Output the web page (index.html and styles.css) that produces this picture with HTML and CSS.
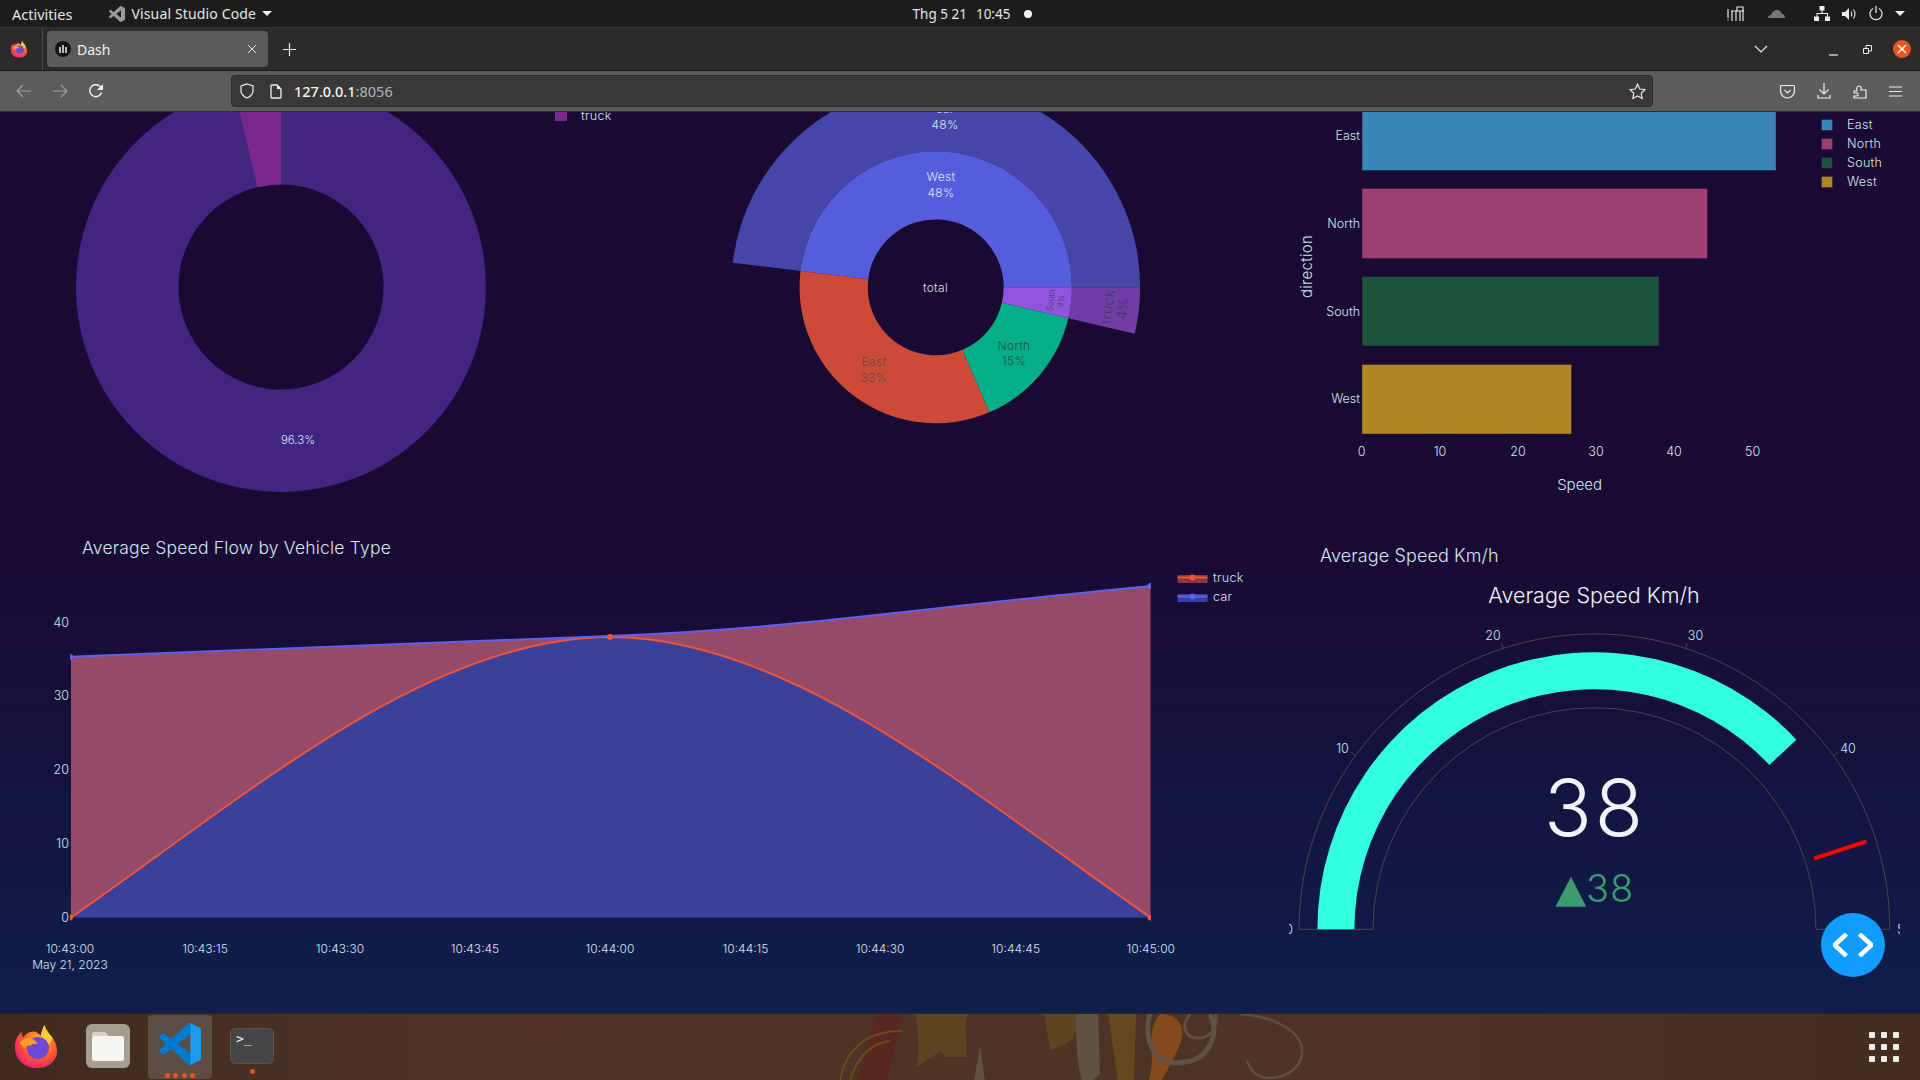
FILE: index.html
```html
<!DOCTYPE html>
<html lang="en">
<head>
<meta charset="utf-8">
<title>Dash</title>
<link rel="stylesheet" href="styles.css">
</head>
<body>
<div class="desktop">
  <header class="topbar">
    <div class="top-left">
      <span class="activities">Activities</span>
      <span class="app-menu">
        <svg class="app-icon" width="16" height="16" viewBox="0 0 100 100"><path fill="#9a9a9a" d="M96.5 10.8 75.9.9a6.2 6.2 0 0 0-7.1 1.2L29.4 38.1 12.2 25a4.2 4.2 0 0 0-5.3.2L1.4 30.3a4.2 4.2 0 0 0 0 6.2L16.3 50 1.4 63.6a4.2 4.2 0 0 0 0 6.2l5.500 5a4.2 4.2 0 0 0 5.300.2l17.200-13 39.400 35.900a6.2 6.2 0 0 0 7.100 1.200l20.600-9.900a6.200 6.200 0 0 0 3.500-5.600V16.400a6.200 6.200 0 0 0-3.500-5.600zM75 72.700 45.100 50 75 27.300z"/></svg>
        <span class="app-name">Visual Studio Code</span>
        <i class="caret"></i>
      </span>
    </div>
    <div class="clock"><span>Thg 5 21</span><span>10:45</span><i class="clock-dot"></i></div>
    <div class="tray">
      <svg width="17" height="16" viewBox="0 0 17 16" fill="none" stroke="#e6e6e6" stroke-width="1.2"><path d="M1 3v9M1 13.500v1M5 5v10M9 5v10M13 5v10M16 5v10M4 5h13M10 5V1h6v4"/></svg>
      <svg class="tray-cloud" width="17" height="10" viewBox="0 0 17 10"><path fill="#777" d="M0 9c0-2 1.500-3 3-3 1-3 3-5 6-5s4 2 5 4c2 0 3 2 3 4z"/></svg>
      <svg class="tray-net" width="16" height="15" viewBox="0 0 16 15" fill="#eee"><rect x="5.500" y="0" width="5" height="4.500"/><rect x="0" y="10.500" width="5" height="4.500"/><rect x="11" y="10.500" width="5" height="4.500"/><path d="M7.500 4h1v3h5.500v4h-1V8H3.500v3h-1V7h5z"/></svg>
      <svg width="15" height="14" viewBox="0 0 15 14" fill="none"><path fill="#eee" d="M0 5h3l4-4v12l-4-4H0z"/><path stroke="#eee" stroke-width="1.100" d="M9 4.500c1 1.500 1 3.500 0 5M11.500 2.500c2 3 2 6 0 9"/></svg>
      <svg width="14" height="15" viewBox="0 0 14 15" fill="none" stroke="#eee" stroke-width="1.200"><path d="M7 0v7M4 2.500a6 6 0 1 0 6 0"/></svg>
      <i class="caret"></i>
    </div>
  </header>

  <div class="tabbar">
    <div class="tab-logo">
      <svg width="18" height="18" viewBox="0 0 48 48"><use href="#firefox"/></svg>
    </div>
    <div class="tab">
      <span class="favicon"><i></i><i></i><i></i></span>
      <span class="tab-title">Dash</span>
      <svg class="tab-close" width="10" height="10" viewBox="0 0 10 10" stroke="#ddd" stroke-width="1"><path d="M1 1l8 8M9 1l-8 8"/></svg>
    </div>
    <svg class="tab-new" width="13" height="13" viewBox="0 0 13 13" stroke="#eee" stroke-width="1.200"><path d="M6.500 0v13M0 6.500h13"/></svg>
    <div class="tabbar-right">
      <svg class="tab-list" width="14" height="8" viewBox="0 0 14 8" fill="none" stroke="#eee" stroke-width="1.100"><path d="M1 1l6 6 6-6"/></svg>
      <svg class="win-min" width="9" height="9" viewBox="0 0 9 9" stroke="#eee" stroke-width="1.200"><path d="M0 8h9"/></svg>
      <svg class="win-max" width="9" height="9" viewBox="0 0 9 9" fill="none" stroke="#eee" stroke-width="1"><path d="M.5 3.500h5v5h-5zM3 3V.5h5.500V6H6"/></svg>
      <span class="win-close"><svg width="10" height="10" viewBox="0 0 10 10" stroke="#fff" stroke-width="1.400"><path d="M1 1l8 8M9 1l-8 8"/></svg></span>
    </div>
  </div>

  <nav class="toolbar">
    <div class="nav-btns">
      <svg width="16" height="14" viewBox="0 0 16 14" fill="none" stroke="#a2a2a2" stroke-width="1.200"><path d="M15 7H1M7 1L1 7l6 6"/></svg>
      <svg width="16" height="14" viewBox="0 0 16 14" fill="none" stroke="#a2a2a2" stroke-width="1.200"><path d="M1 7h14M9 1l6 6-6 6"/></svg>
      <svg width="16" height="16" viewBox="0 0 16 16" fill="none" stroke="#f2f2f2" stroke-width="1.400"><path d="M13.500 9.500A6 6 0 1 1 11.500 3L14 5"/><path fill="#f2f2f2" stroke="none" d="M15 1v6H9z"/></svg>
    </div>
    <div class="urlbar">
      <svg width="14" height="16" viewBox="0 0 14 16" fill="none" stroke="#eee" stroke-width="1.200"><path d="M7 1l6 2v5c0 3-3 6-6 7-3-1-6-4-6-7V3z"/></svg>
      <svg class="url-doc" width="12" height="15" viewBox="0 0 12 15" fill="none" stroke="#eee" stroke-width="1.300"><path d="M1 2c0-.6.400-1 1-1h5l4 4v8c0 .6-.4 1-1 1H2c-.6 0-1-.4-1-1z"/><path fill="#eee" stroke="none" d="M7 1l4 4H7z"/></svg>
      <span class="url"><b>127.0.0.1</b>:8056</span>
      <svg class="url-star" width="17" height="17" viewBox="0 0 17 17" fill="none" stroke="#eee" stroke-width="1.200"><path d="M8.500 1.200l2.300 4.800 5.200.7-3.800 3.600.9 5.200-4.600-2.500-4.600 2.500.9-5.200L1 6.700l5.200-.7z"/></svg>
    </div>
    <div class="tools">
      <svg width="15" height="15" viewBox="0 0 15 15" fill="none" stroke="#eee" stroke-width="1.200"><path d="M1.500 1.500h12c.6 0 1 .4 1 1V7c0 4-3.500 7-7 7s-7-3-7-7V2.500c0-.6.400-1 1-1z"/><path d="M4.500 6l3 3 3-3"/></svg>
      <svg width="14" height="16" viewBox="0 0 14 16" fill="none" stroke="#eee" stroke-width="1.200"><path d="M7 0v11M2.500 6.500L7 11l4.500-4.500M1 12v3h12v-3"/></svg>
      <svg width="14" height="17" viewBox="0 0 14 17" fill="none" stroke="#eee" stroke-width="1.200"><path d="M1 9h3V8c-1-2 .5-4 2-4S9 6 8 7.500V8h5v8H1v-2h3c1.500 0 1.500-3 0-3H1z" transform="translate(0 -1)"/></svg>
      <svg width="13" height="11" viewBox="0 0 13 11" stroke="#eee" stroke-width="1.200"><path d="M0 1h13M0 5.500h13M0 10h13"/></svg>
    </div>
  </nav>

  <main class="dashboard">
    <section class="panel panel-pie">
      <svg class="chart" viewBox="0 112 620 408" width="620" height="408">
        <circle class="pie-ring" cx="281" cy="287" r="153.750"/>
        <path class="pie-slice" d="M281 82V184.500A102.500 102.500 0 0 0 257.400 187.300L233.800 87.500A205 205 0 0 1 281 82Z"/>
        <text class="t t-11" x="298" y="440" text-anchor="middle">96.3%</text>
        <rect class="pie-slice" x="555" y="105" width="12" height="16"/>
        <text class="t t-13 lg" x="581" y="116">truck</text>
      </svg>
    </section>

    <section class="panel panel-sun">
      <svg class="chart" viewBox="620 112 660 408" width="660" height="408">
        <path class="s-car" d="M1140.200 287.300A204.500 204.500 0 0 0 732.700 262.800L800.500 271A136.200 136.200 0 0 1 1071.900 287.300Z"/>
        <path class="s-truck" d="M1134.800 333.800A204.500 204.500 0 0 0 1140.200 287.300L1071.900 287.300A136.200 136.200 0 0 1 1068.300 318.300Z"/>
        <path class="s-west" d="M1071.900 287.300A136.200 136.200 0 0 0 800.500 271L868.200 279.200A68 68 0 0 1 1003.700 287.300Z"/>
        <path class="s-east" d="M800.500 271A136.200 136.200 0 0 0 989.300 412.300L962.500 349.800A68 68 0 0 1 868.200 279.200Z"/>
        <path class="s-north" d="M989.300 412.300A136.200 136.200 0 0 0 1068.300 318.300L1001.900 302.800A68 68 0 0 1 962.500 349.800Z"/>
        <path class="s-south" d="M1068.300 318.300A136.200 136.200 0 0 0 1071.900 287.300L1003.700 287.300A68 68 0 0 1 1001.900 302.800Z"/>
        <text class="t t-12 c lg" x="945" y="109">car</text>
        <text class="t t-12 c lg" x="945" y="125">48%</text>
        <text class="t t-12 c lg" x="941" y="177">West</text>
        <text class="t t-12 c lg" x="941" y="193">48%</text>
        <text class="t t-12 c lg" x="935.500" y="288">total</text>
        <text class="t t-12 c lg dark" x="874" y="362">East</text>
        <text class="t t-12 c lg dark" x="874" y="378">33%</text>
        <text class="t t-12 c lg dark2" x="1014" y="346">North</text>
        <text class="t t-12 c lg dark2" x="1014" y="361">15%</text>
        <text class="t t-8 c dark3" transform="translate(1050.700 300.700) rotate(-83)">South</text>
        <text class="t t-8 c dark3" transform="translate(1060.700 301.700) rotate(-83)">4%</text>
        <text class="t t-14 c lg dark3" transform="translate(1107.300 307) rotate(-83)">truck</text>
        <text class="t t-14 c dark3" transform="translate(1122 309) rotate(-83)">4%</text>
      </svg>
    </section>

    <section class="panel panel-bars">
      <svg class="chart" viewBox="1280 112 640 408" width="640" height="408">
        <rect class="bar b-east" x="1362" y="100" width="414" height="70.500"/>
        <rect class="bar b-north" x="1362" y="188.500" width="345.500" height="70"/>
        <rect class="bar b-south" x="1362" y="276.500" width="297" height="69.500"/>
        <rect class="bar b-west" x="1362" y="364.500" width="209.500" height="69.500"/>
        <text class="t t-13 e" x="1360" y="136">East</text>
        <text class="t t-13 e" x="1360" y="224">North</text>
        <text class="t t-13 e" x="1360" y="312">South</text>
        <text class="t t-13 e" x="1360" y="399">West</text>
        <text class="t t-13 c" x="1361.600" y="452">0</text>
        <text class="t t-13 c" x="1440" y="452">10</text>
        <text class="t t-13 c" x="1518" y="452">20</text>
        <text class="t t-13 c" x="1596" y="452">30</text>
        <text class="t t-13 c" x="1674" y="452">40</text>
        <text class="t t-13 c" x="1752.600" y="452">50</text>
        <text class="t t-15 c" x="1579.600" y="485">Speed</text>
        <text class="t t-15 c lg" transform="translate(1306 267) rotate(-90)">direction</text>
        <rect class="bar b-east" x="1821.500" y="119.500" width="11" height="11"/>
        <rect class="bar b-north" x="1821.500" y="138.500" width="11" height="11"/>
        <rect class="bar b-south" x="1821.500" y="157.500" width="11" height="11"/>
        <rect class="bar b-west" x="1821.500" y="176.500" width="11" height="11"/>
        <text class="t t-13 lg" x="1847" y="125">East</text>
        <text class="t t-13 lg" x="1847" y="144">North</text>
        <text class="t t-13 lg" x="1847" y="163">South</text>
        <text class="t t-13 lg" x="1847" y="182">West</text>
      </svg>
    </section>

    <section class="panel panel-line">
      <svg class="chart" viewBox="0 520 1280 493" width="1280" height="493">
        <defs><clipPath id="plot-clip"><rect x="70" y="560" width="1081" height="362"/></clipPath></defs>
        <text class="t t-17" x="82" y="547.500">Average Speed Flow by Vehicle Type</text>
        <path class="a-car" d="M71 656.700C250 651 430 643 610 636S900 610 1150.500 586V917.500H71Z"/>
        <path class="a-truck" d="M71 917.500C251 792 430 637 610 637S970 792 1150.500 917.500Z"/>
        <path class="zero" d="M71 917.500H1150.500"/>
        <g clip-path="url(#plot-clip)">
          <path class="l-truck" d="M71 917.500C251 792 430 637 610 637S970 792 1150.500 917.500"/>
          <path class="l-car" d="M71 656.700C250 651 430 643 610 636S900 610 1150.500 586"/>
          <circle class="m-car" cx="70" cy="656.700" r="3"/>
          <circle class="m-car" cx="1150.500" cy="586" r="3"/>
          <circle class="m-truck" cx="610" cy="637" r="3"/>
          <circle class="m-truck" cx="70" cy="917.500" r="3"/>
          <circle class="m-truck" cx="1150.500" cy="917.500" r="3"/>
        </g>
        <text class="t t-13 e" x="69" y="623">40</text>
        <text class="t t-13 e" x="69" y="696">30</text>
        <text class="t t-13 e" x="69" y="770">20</text>
        <text class="t t-13 e" x="69" y="844">10</text>
        <text class="t t-13 e" x="69" y="918">0</text>
        <text class="t t-12 c" x="70" y="949">10:43:00</text>
        <text class="t t-12 c" x="70" y="965">May 21, 2023</text>
        <text class="t t-12 c" x="205" y="949">10:43:15</text>
        <text class="t t-12 c" x="340" y="949">10:43:30</text>
        <text class="t t-12 c" x="475" y="949">10:43:45</text>
        <text class="t t-12 c" x="610" y="949">10:44:00</text>
        <text class="t t-12 c" x="745.500" y="949">10:44:15</text>
        <text class="t t-12 c" x="880" y="949">10:44:30</text>
        <text class="t t-12 c" x="1015.700" y="949">10:44:45</text>
        <text class="t t-12 c" x="1150.800" y="949">10:45:00</text>
        <rect class="k-truck" x="1177.500" y="575" width="30" height="8"/>
        <path class="l-truck" d="M1177.500 577.500h30"/>
        <circle class="m-truck" cx="1192.500" cy="577.500" r="3"/>
        <text class="t t-13 lg" x="1213" y="578">truck</text>
        <rect class="k-car" x="1177.500" y="594" width="30" height="8"/>
        <path class="l-car" d="M1177.500 596.500h30"/>
        <circle class="m-car" cx="1192.500" cy="596.500" r="3"/>
        <text class="t t-13 lg" x="1213" y="597">car</text>
      </svg>
    </section>

    <section class="panel panel-gauge">
      <svg class="chart" viewBox="1280 520 640 493" width="640" height="493">
        <defs><clipPath id="gauge-clip"><rect x="1289" y="520" width="611" height="493"/></clipPath></defs>
        <text class="t t-18" x="1320" y="556">Average Speed Km/h</text>
        <text class="t t-22 c white" x="1594" y="595">Average Speed Km/h</text>
        <path class="g-frame" d="M1299 929.300A295.400 295.400 0 0 1 1889.800 929.300H1816A221.400 221.400 0 0 0 1373 929.300Z"/>
        <path class="g-frame" d="M1355.400 755.700L1350.900 752.400M1503.100 648.300L1501.400 643M1685.700 648.300L1687.400 643M1833.400 755.700L1837.900 752.400"/>
        <path class="g-bar" d="M1317.400 929.300A277 277 0 0 1 1796.400 739.700L1769.400 765A240 240 0 0 0 1354.400 929.300Z"/>
        <path class="g-thresh" d="M1813.900 858.700L1866.500 841.300"/>
        <text class="t t-13 c" x="1342.500" y="749">10</text>
        <text class="t t-13 c" x="1493" y="636">20</text>
        <text class="t t-13 c" x="1695.500" y="636">30</text>
        <text class="t t-13 c" x="1848" y="749">40</text>
        <g clip-path="url(#gauge-clip)">
          <text class="t t-13 e" x="1293" y="930">0</text>
          <text class="t t-13" x="1897" y="930">50</text>
        </g>
        <text class="g-num" x="1595" y="836">38</text>
        <path class="g-tri" d="M1571 876.700L1586.300 906.700H1555.500Z"/>
        <text class="g-delta" x="1586" y="902">38</text>
      </svg>
    </section>

    <button class="debug-btn" type="button" aria-label="Toggle debug">
      <svg width="40" height="24" viewBox="0 0 40 24" fill="none" stroke="#fff" stroke-width="4.500"><path d="M13.500 1L1.500 12l12 11M26.500 1l12 11-12 11"/></svg>
    </button>
  </main>

  <footer class="dock">
    <svg class="wallpaper" viewBox="0 0 1920 67" width="1920" height="67" preserveAspectRatio="none">
      <path fill="#54301f" d="M510 0h60l-20 30-15 0z" opacity=".5"/>
      <path fill="#5a2620" d="M878 0h26l-8 30-10 37h-27l6-30z"/>
      <path fill="#5e4420" d="M916 0h52c-6 22 2 30-2 43h-20l-5-6-12 8-13 8c6-20 0-38 0-53z"/>
      <path fill="none" stroke="#6b4a1c" stroke-width="2" d="M840 67c5-30 25-50 62-50M850 67c6-22 20-38 40-40"/>
      <path fill="#625042" d="M980 32l5 35h-11z"/>
      <path fill="#5e4420" d="M1044 0h32c3 15 0 30-26 36z"/>
      <path fill="#5f5245" d="M1076 0h22l2 60-8 7h-10c-6-20-6-45-6-67z"/>
      <path fill="#66481e" d="M1108 0h28l-2 67h-16z"/>
      <path fill="#84491c" d="M1160 0c20 0 28 15 18 35l-10 20-7 12h-13c10-22-5-45 12-67z"/>
      <path fill="none" stroke="#5f5245" stroke-width="5" d="M1150 0c-8 25 5 55 35 48 25-3 35-30 25-48"/>
      <path fill="none" stroke="#5c5043" stroke-width="2.500" d="M1240 0c30 2 60 15 62 35 2 20-20 32-40 28-8-2-12-8-15-16"/>
      <path fill="none" stroke="#5f5245" stroke-width="3" d="M1190 0c-10 12-5 24 8 24s20-12 18-24"/>
    </svg>
    <div class="dock-item dock-firefox">
      <svg width="46" height="48" viewBox="0 0 48 48"><use href="#firefox"/></svg>
    </div>
    <div class="dock-item dock-files">
      <svg width="44" height="44" viewBox="0 0 44 44"><rect width="44" height="44" rx="6" fill="#a59f8e"/><path fill="#d6d2c8" d="M6 11c0-2 1-3 3-3h10l5 5H6z"/><rect x="6" y="12" width="32" height="25" rx="2.500" fill="#f7f5f2"/></svg>
    </div>
    <div class="dock-item dock-code">
      <svg width="42" height="42" viewBox="0 0 100 100"><path fill="#007acc" d="M96.500 10.800 75.900.9a6.200 6.200 0 0 0-7.100 1.200L29.400 38.100 12.200 25a4.200 4.200 0 0 0-5.300.2L1.400 30.300a4.200 4.200 0 0 0 0 6.200L16.300 50 1.400 63.600a4.200 4.200 0 0 0 0 6.200l5.500 5a4.200 4.200 0 0 0 5.300.2l17.200-13 39.400 35.900a6.200 6.200 0 0 0 7.100 1.200l20.600-9.900a6.200 6.200 0 0 0 3.500-5.600V16.400a6.200 6.200 0 0 0-3.500-5.600zM75 72.700 45.100 50 75 27.300z"/><path fill="#1f9cf0" d="M68.800 2.100a6.200 6.200 0 0 1 7.100-1.200l20.600 9.900a6.200 6.200 0 0 1 3.500 5.600v67.200a6.200 6.200 0 0 1-3.500 5.600l-20.600 9.900a6.200 6.200 0 0 1-7.100-1.200c2.500 2.400 6.200.7 6.200-2.800V4.900c0-3.500-3.700-5.200-6.200-2.800z"/></svg>
      <span class="dots"><i></i><i></i><i></i><i></i></span>
    </div>
    <div class="dock-item dock-term">
      <span class="term"><span class="term-prompt">&gt;_</span></span>
      <span class="dots"><i></i></span>
    </div>
    <div class="apps-grid"><i></i><i></i><i></i><i></i><i></i><i></i><i></i><i></i><i></i></div>
  </footer>
</div>

<svg class="defs-only" width="0" height="0">
  <defs>
    <radialGradient id="ff-body" cx="60%" cy="35%" r="75%"><stop offset="0" stop-color="#ffbd30"/><stop offset=".55" stop-color="#ff5a2c"/><stop offset="1" stop-color="#e31587"/></radialGradient>
    <g id="firefox">
      <path fill="url(#ff-body)" d="M33 2c1 5 4 8 8 13 5 7 6 14 4 20-3 8-11 12-20 12C12 47 2 38 2 25 2 18 5 12 9 9c0 3 1 5 2 6 2-4 6-6 9-6 3-1 6 1 9 4 1-4 2-8 4-11z"/>
      <path fill="#ffca3a" d="M33 2c-2 3-3 7-4 11 3 3 6 8 6 12 4-4 7-8 6-10C37 10 34 7 33 2z"/>
      <circle cx="26" cy="26" r="11.500" fill="#6c4bd3"/>
      <path fill="#ff9d2a" d="M7 20c4-4 10-6 14-3 3 2 4 3 5 5-3-1-7 0-8 2-2-1-4 0-6 2-2-2-4-4-5-6z"/>
    </g>
  </defs>
</svg>
</body>
</html>
```
FILE: styles.css
```css
* { box-sizing: border-box; }
html, body { margin: 0; height: 100%; overflow: hidden; background: #190933; }
body { font-family: "Noto Sans", "Open Sans", sans-serif; }
svg { display: block; flex: none; }
.defs-only { position: absolute; }

.desktop { width: 1920px; height: 1080px; display: flex; flex-direction: column; }

.topbar {
  height: 27px; background: #1c1c1c; color: #e6e6e6; font-size: 14px;
  display: grid; grid-template-columns: 1fr auto 1fr; align-items: center; padding: 0 15px 0 12px;
}
.top-left { display: flex; align-items: center; gap: 37px; }
.activities { font-size: 14.500px; }
.app-menu { display: flex; align-items: center; gap: 6px; }
.app-name { letter-spacing: .15px; }
.caret { display: block; width: 0; height: 0; border-left: 5px solid transparent; border-right: 5px solid transparent; border-top: 5px solid #eee; }
.clock { display: flex; align-items: center; gap: 9px; margin-left: 28px; font-size: 13.500px; }
.clock-dot { width: 8px; height: 8px; border-radius: 50%; background: #f2f2f2; margin-left: 5px; }
.tray { display: flex; align-items: center; justify-content: flex-end; gap: 12px; }
.tray-cloud { margin: 0 17px 0 12px; }

.tabbar { height: 44px; background: #2b2b2b; border-bottom: 1px solid #1a1a1a; border-top: 1px solid #333; display: flex; align-items: center; padding-right: 9px; }
.tab-logo { width: 43px; height: 100%; border-right: 1px solid #4a4a4a; display: flex; align-items: center; justify-content: center; padding-right: 4px; }
.tab { width: 221px; height: 36px; margin-left: 4px; background: #5b5b5b; border-radius: 4px; display: flex; align-items: center; padding: 0 11px 0 8px; color: #f2f2f2; font-size: 14px; }
.favicon { width: 16px; height: 16px; border-radius: 50%; background: #141414; display: flex; align-items: flex-end; justify-content: center; gap: 1px; padding-bottom: 4px; margin-right: 6px; }
.favicon i { display: block; width: 2px; height: 6px; background: #bbb; }
.favicon i:nth-child(2) { height: 8px; }
.tab-title { flex: 1; }
.tab-new { margin-left: 15px; }
.tabbar-right { margin-left: auto; display: flex; align-items: center; }
.win-min { margin-left: 61px; margin-top: 5px; }
.win-max { margin-left: 25px; }
.win-close { width: 18px; height: 18px; margin-left: 21px; border-radius: 50%; background: #e95420; display: flex; align-items: center; justify-content: center; }

.toolbar { height: 41px; background: #5c5c5c; border-bottom: 1px solid #2b2b2b; display: flex; align-items: center; padding: 0 18px 0 16px; }
.nav-btns { display: flex; align-items: center; gap: 20px; width: 215px; }
.urlbar { width: 1422px; height: 32px; background: #383838; border: 1px solid #2a2a2a; border-radius: 4px; display: flex; align-items: center; padding: 0 6px 0 8px; }
.url-doc { margin-left: 16px; }
.url { margin-left: 12px; font-size: 14.500px; color: #b4b4b4; }
.url b { font-weight: 500; color: #f5f5f5; }
.url-star { margin-left: auto; }
.tools { margin-left: auto; display: flex; align-items: center; gap: 22px; }

.dashboard {
  position: relative; flex: 1; min-height: 0; overflow: hidden;
  display: grid; grid-template-columns: 620px 660px 640px; grid-template-rows: 408px 493px;
  background: linear-gradient(180deg, #190933 0%, #190933 48%, #0f1e4b 100%);
}
.panel { min-width: 0; overflow: hidden; }
.panel-line { grid-column: 1 / span 2; }
.panel-gauge { grid-column: 3; }

.t { font-family: Inter, "Noto Sans", sans-serif; font-weight: 300; fill: #d3e8f2; dominant-baseline: central; translate: 0 -.5px; }
.lg { letter-spacing: .3px; }
.t-8 { font-size: 8px; }
.t-11 { font-size: 11.500px; }
.t-12 { font-size: 12px; }
.t-13 { font-size: 12.500px; }
.t-14 { font-size: 14px; }
.t-15 { font-size: 15px; }
.t-17 { font-size: 17.500px; letter-spacing: .2px; }
.t-18 { font-size: 18px; letter-spacing: .1px; }
.t-22 { font-size: 21.500px; }
.c { text-anchor: middle; }
.e { text-anchor: end; }
.white { fill: #eef5f8; }
.dark { fill: #5a4a50; }
.dark2 { fill: #2f4a58; }
.dark3 { fill: #3f3a60; }

.pie-ring { fill: none; stroke: #412581; stroke-width: 102.500px; }
.pie-slice { fill: #7a288e; }

.s-car { fill: #4646a8; }
.s-truck { fill: #6f3da5; }
.s-west { fill: #565ddb; }
.s-east { fill: #cd4a38; }
.s-north { fill: #04ae86; }
.s-south { fill: #9055dc; }

.bar { stroke-width: 1px; stroke-opacity: .35; stroke: #190933; }
.b-east { fill: #3a86b8; }
.b-north { fill: #9c3f72; }
.b-south { fill: #1c533c; }
.b-west { fill: #b18522; }

.a-car { fill: #954a67; }
.a-truck { fill: #3b419b; }
.zero { fill: none; stroke: #2c2f75; stroke-width: 1px; }
.l-truck { fill: none; stroke: #ef553b; stroke-width: 2px; }
.l-car { fill: none; stroke: #5f60f0; stroke-width: 2px; }
.m-truck { fill: #ef553b; }
.m-car { fill: #5f60f0; }
.k-truck { fill: #8f3440; }
.k-car { fill: #3d3f9f; }

.g-frame { fill: none; stroke: #4a4650; stroke-width: 1px; }
.g-bar { fill: #33ffe0; }
.g-thresh { fill: none; stroke: #ff0000; stroke-width: 4px; }
.g-num { font-family: Inter, "Noto Sans", sans-serif; font-weight: 300; font-size: 79px; letter-spacing: 3px; fill: #f0f4fa; text-anchor: middle; }
.g-delta { font-family: Inter, "Noto Sans", sans-serif; font-weight: 300; font-size: 38px; letter-spacing: 1px; fill: #3d9970; }
.g-tri { fill: #3d9970; }

.debug-btn {
  position: absolute; right: 35px; bottom: 36px; width: 64px; height: 64px; padding: 0; border: 0; border-radius: 50%;
  background: #119dff; display: flex; align-items: center; justify-content: center;
}

.dock { position: relative; height: 67px; background: linear-gradient(90deg, #402a20 0%, #4d3324 25%, #4d3324 72%, #432c20 100%); border-top: 1px solid #2f231c; display: flex; align-items: flex-start; overflow: hidden; }
.wallpaper { position: absolute; left: 0; top: 0; }
.dock-item { position: relative; display: flex; flex-direction: column; align-items: center; }
.dock-firefox { margin: 8px 0 0 13px; }
.dock-files { margin: 10px 0 0 27px; }
.dock-code { width: 64px; height: 64px; margin: 1px 0 0 18px; padding-top: 8px; background: #5d4c42; border-radius: 4px; }
.dock-term { width: 44px; margin: 14px 0 0 18px; }
.term { display: block; width: 44px; height: 36px; background: #454545; border-radius: 5px; border: 1px solid #555; padding: 3px 5px; color: #f2f2f2; font-size: 13px; line-height: 14px; font-family: "DejaVu Sans Mono", monospace; }
.dots { position: absolute; left: 0; right: 0; bottom: 0; display: flex; justify-content: center; gap: 3.500px; }
.dots i { display: block; width: 5px; height: 5px; border-radius: 50%; background: #e95420; }
.dock-code .dots { bottom: 1px; }
.dock-term .dots { bottom: -10px; }
.apps-grid { position: relative; margin: 18px 21px 0 auto; display: grid; grid-template-columns: repeat(3, 6px); grid-auto-rows: 6px; gap: 6px; }
.apps-grid i { display: block; background: #ececec; border-radius: 1px; }
```
